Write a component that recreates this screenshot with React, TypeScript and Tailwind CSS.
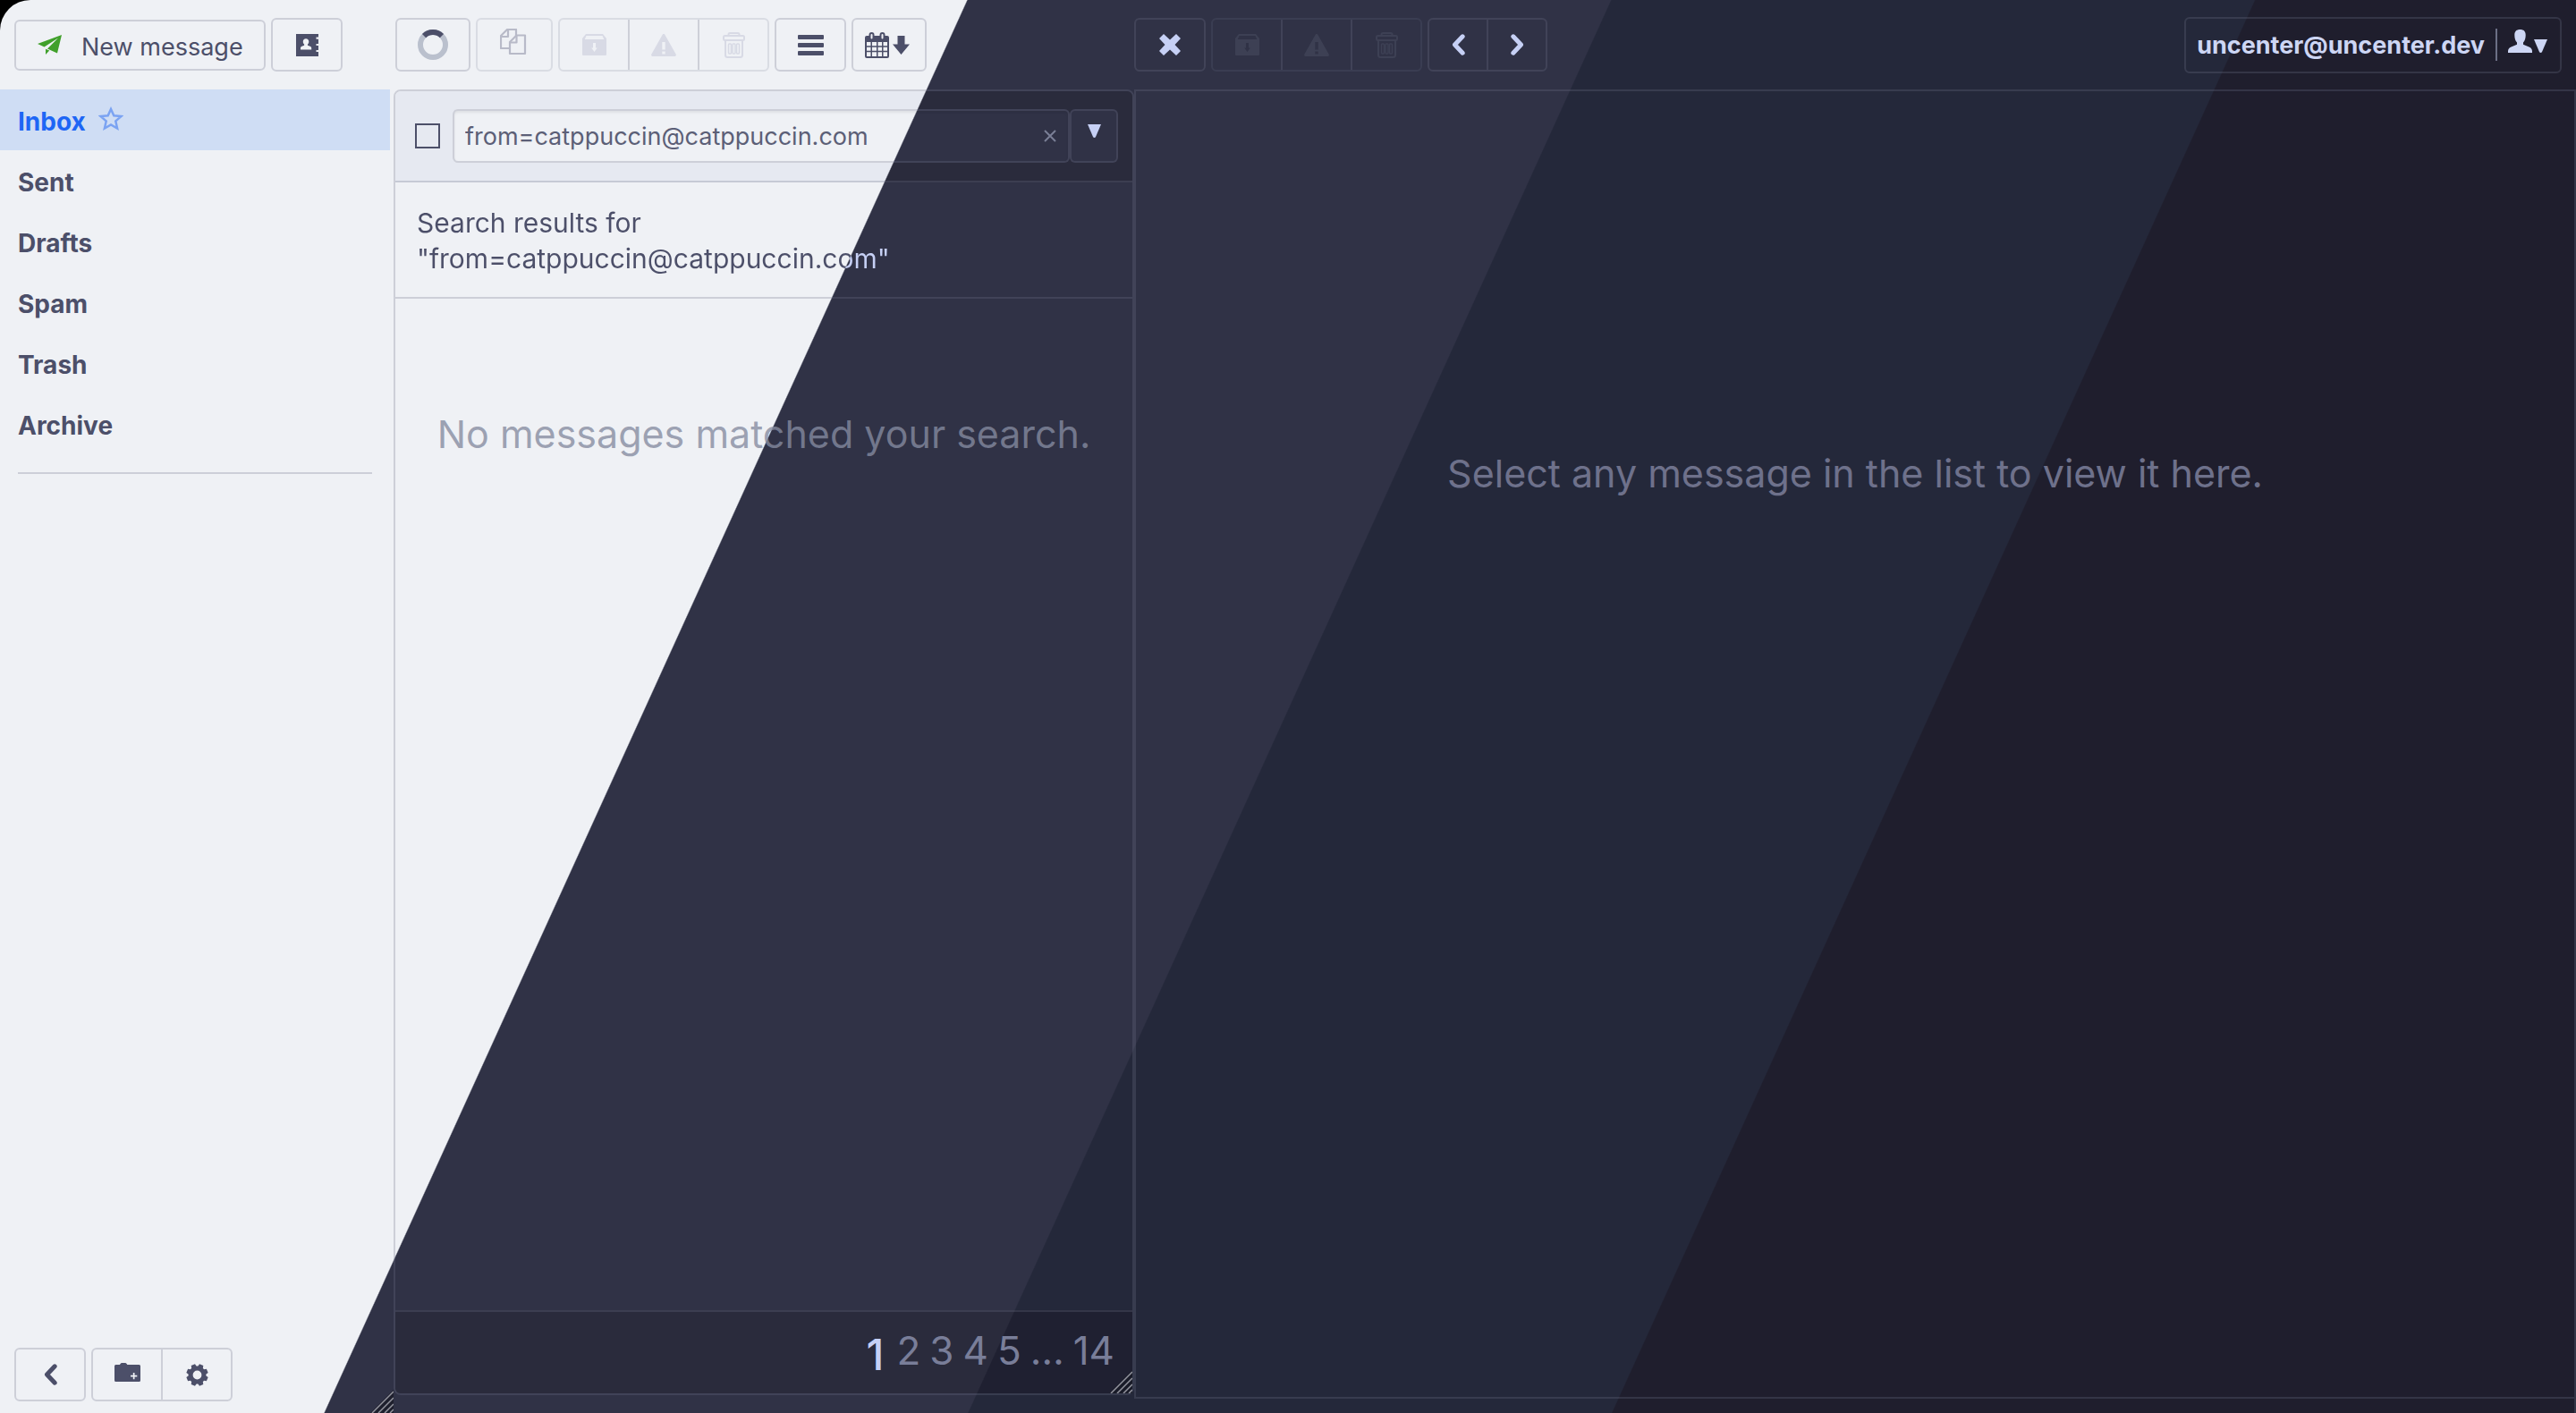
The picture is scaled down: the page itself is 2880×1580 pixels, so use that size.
import type { ReactNode } from "react";

// Four flavours share one page; each diagonal band shows one of them.
const BASE =
  "bg-fixed bg-[linear-gradient(114.47deg,#eff1f5_30.03%,#303246_30.07%,#303246_50.03%,#24283a_50.07%,#24283a_70.03%,#1f1e2d_70.07%)]";
const MANTLE =
  "bg-fixed bg-[linear-gradient(114.47deg,#e6e9f1_30.03%,#2a2b3c_30.07%,#2a2b3c_50.03%,#1f2031_50.07%,#1f2031_70.03%,#191825_70.07%)]";
const TEXT =
  "bg-fixed bg-clip-text text-transparent bg-[linear-gradient(114.47deg,#4c4f69_30.03%,#c6d0f5_30.07%)]";
const LINE = "border-[rgb(112_117_140/0.265)]";
const FAINT = "border-[rgb(112_117_140/0.17)]";

type IconProps = { w: number; h: number; children: ReactNode; className?: string };

function Icon({ w, h, children, className = "" }: IconProps) {
  return (
    <svg
      aria-hidden="true"
      width={w}
      height={h}
      viewBox={`0 0 ${w} ${h}`}
      fill="currentColor"
      className={`shrink-0 ${className}`}
    >
      {children}
    </svg>
  );
}

function PaperPlane() {
  return (
    <Icon w={27} h={22} className="text-[#40a02b]">
      <path d="M27 0 0 10l7.5 3.6L23 3.5 11 15.6 22 20.5Z" />
      <path d="M9 15.8v6.2l4.2-4.4Z" />
    </Icon>
  );
}

function AddressBook() {
  return (
    <Icon w={25} h={25}>
      <path
        fillRule="evenodd"
        d="M0 0h25v3.5h-2.5v2.2H25v5.2h-2.5v2H25v5h-2.5v2.2H25V25H0ZM11 5.2c-2 0-3.2 1.5-3.2 3.4 0 1.3.5 2.3 1.3 2.9v1.2L6 14c-.7.4-1 1-1 1.8V17.5h12.200V15.800c0-.8-.4-1.400-1-1.800l-3.200-1.300v-1.200c.8-.6 1.300-1.600 1.300-2.900 0-1.900-1.300-3.400-3.300-3.400Z"
      />
    </Icon>
  );
}

function Spinner() {
  return (
    <Icon w={34} h={34}>
      <circle cx="17" cy="17" r="14" fill="none" stroke="#bac0cd" strokeWidth="6" />
      <path d="M7.100 7.100a14 14 0 0 1 19.800 0" fill="none" stroke="#4c4f69" strokeWidth="6" />
    </Icon>
  );
}

function Copy() {
  return (
    <Icon w={32} h={36}>
      <g fill="none" stroke="currentColor" strokeWidth="2.200" strokeLinejoin="round">
        <path d="M11 22H1V8l7-7h10v7" />
        <path d="M1.500 9H9V1.500" />
        <path d="M11 15v13h17V7.500H18.500L11 15Z" />
        <path d="M11.500 15.500H18.500V8" />
      </g>
    </Icon>
  );
}

function Archive() {
  return (
    <Icon w={27} h={24}>
      <path d="M4 0h19l4 5v1.500h-2.500L22.500 2H4.500L2.500 6.500H0V5Z" />
      <path
        fillRule="evenodd"
        d="M0 6h27v17a1 1 0 0 1-1 1H1a1 1 0 0 1-1-1ZM12 10v5.500h-1.800L13.500 20l3.300-4.500H15V10Z"
      />
    </Icon>
  );
}

function Warning() {
  return (
    <Icon w={28} h={25}>
      <path
        fillRule="evenodd"
        d="M14 0c.8 0 1.200.5 1.600 1.200l12 21.300c.6 1.200.2 2.500-1.100 2.500h-25C.2 25-.2 23.700.4 22.500l12-21.300C12.800.5 13.200 0 14 0Zm-1.700 9v8.500h3.400V9Zm0 10.500v3h3.400v-3Z"
      />
    </Icon>
  );
}

function Trash() {
  return (
    <Icon w={25} h={29}>
      <g fill="none" stroke="currentColor" strokeWidth="2">
        <path d="M6.500 4V2.500C6.500 1.500 7 1 8 1h9c1 0 1.500.5 1.500 1.500V4" />
        <rect x="1" y="4" width="23" height="5" rx="1.500" />
        <path d="M3 9v16.500C3 27 4 28 5.500 28h14c1.500 0 2.500-1 2.500-2.500V9" />
        <rect x="6.500" y="13" width="3" height="11" rx="1" strokeWidth="1.500" />
        <rect x="11" y="13" width="3" height="11" rx="1" strokeWidth="1.500" />
        <rect x="15.500" y="13" width="3" height="11" rx="1" strokeWidth="1.500" />
      </g>
    </Icon>
  );
}

function Menu() {
  return (
    <Icon w={29} h={23}>
      <rect width="29" height="5" rx="1" />
      <rect y="9" width="29" height="5" rx="1" />
      <rect y="18" width="29" height="5" rx="1" />
    </Icon>
  );
}

function Calendar() {
  return (
    <Icon w={27} h={29}>
      <path
        fillRule="evenodd"
        d="M2 4h23a2 2 0 0 1 2 2v21a2 2 0 0 1-2 2H2a2 2 0 0 1-2-2V6a2 2 0 0 1 2-2Zm0 7v4.200h4.500V11Zm6 0v4.200h5V11Zm6.500 0v4.200h4.500V11Zm6 0v4.200H25V11ZM2 16.700v4.100h4.500v-4.100Zm6 0v4.100h5v-4.100Zm6.500 0v4.100h4.500v-4.100Zm6 0v4.100H25v-4.100ZM2 22.300V27h4.500v-4.700Zm6 0V27h5v-4.700Zm6.500 0V27h4.500v-4.700Zm6 0V27H25v-4.700Z"
      />
      <rect x="5.500" y="1" width="4" height="7.500" rx="2" fill="#eff1f5" stroke="currentColor" strokeWidth="2" />
      <rect x="17.500" y="1" width="4" height="7.500" rx="2" fill="#eff1f5" stroke="currentColor" strokeWidth="2" />
    </Icon>
  );
}

function ArrowDown() {
  return (
    <Icon w={19} h={21}>
      <path d="M5.500 0h8v9.500H19L9.500 21 0 9.500h5.500Z" />
    </Icon>
  );
}

function Cross() {
  return (
    <Icon w={24} h={24}>
      <path d="M5 0 12 6.500 19 0l5 5-6.500 7 6.500 7-5 5-7-6.500L5 24l-5-5 6.500-7L0 5Z" />
    </Icon>
  );
}

function Chevron({ right = false }: { right?: boolean }) {
  return (
    <Icon w={15} h={24}>
      <path
        d={right ? "M2.800 2.800 11.500 12l-8.700 9.200" : "M12.200 2.800 3.500 12l8.700 9.200"}
        fill="none"
        stroke="currentColor"
        strokeWidth="5"
        strokeLinecap="round"
        strokeLinejoin="round"
      />
    </Icon>
  );
}

function FolderPlus() {
  return (
    <Icon w={29} h={27}>
      <path
        fillRule="evenodd"
        d="M1.500 2H6c.7-1.500 1.500-2 2.500-2h3c1.200 0 2 .5 2.800 2h13.200A1.500 1.500 0 0 1 29 3.500v16a1.500 1.500 0 0 1-1.500 1.500h-26A1.500 1.500 0 0 1 0 19.500v-16A1.500 1.500 0 0 1 1.500 2Zm19.300 9v2.800H18v1.700h2.800v2.800h1.700v-2.800h2.800v-1.700h-2.800V11Z"
      />
    </Icon>
  );
}

function Gear() {
  const teeth = [22.5, 67.5, 112.5, 157.5, 202.5, 247.5, 292.5, 337.5];
  return (
    <Icon w={25} h={25}>
      <circle cx="12.500" cy="12.500" r="7.400" fill="none" stroke="currentColor" strokeWidth="5" />
      {teeth.map((angle) => (
        <path key={angle} d="M9.200 4.500 10.200.3h4.600l1 4.200Z" transform={`rotate(${angle} 12.500 12.500)`} />
      ))}
    </Icon>
  );
}

function Star() {
  return (
    <Icon w={28} h={27}>
      <path
        d="m14 3 3.300 7.300 8 .8-6 5.300 1.800 8.100L14 20.400l-7.100 4.100 1.800-8.100-6-5.300 8-.8Z"
        fill="none"
        stroke="currentColor"
        strokeWidth="2.500"
      />
    </Icon>
  );
}

function Person() {
  return (
    <Icon w={27} h={26}>
      <path d="M13.500 0c4 0 6.200 2 6.200 6.200 0 3.800-.9 6.300-2.700 8.300v2.300l6.500 2.700c2.300 1 3.500 2.500 3.500 5V26H0v-1.500c0-2.500 1.200-4 3.500-5l6.500-2.700v-2.300C8.200 12.500 7.300 10 7.300 6.200 7.300 2 9.500 0 13.500 0Z" />
    </Icon>
  );
}

function Triangle() {
  return (
    <Icon w={15} h={15}>
      <path d="M0 0h15L9 14a1.700 1.700 0 0 1-3 0Z" />
    </Icon>
  );
}

function ResizeGrip({ className }: { className: string }) {
  return (
    <svg aria-hidden="true" width="26" height="26" viewBox="0 0 26 26" fill="none" className={`absolute ${className}`}>
      <path d="M0 26 26 0v26Z" fill="#181926" fillOpacity=".75" />
      <path d="M2 26 26 2M9 26 26 9M16 26l10-10M22 26l4-4" stroke="#94959f" strokeWidth="1.500" />
    </svg>
  );
}

type ButtonProps = { label: string; children: ReactNode; className?: string; disabled?: boolean };

function Cell({ label, children, className = "", disabled = false }: ButtonProps) {
  return (
    <button
      type="button"
      aria-label={label}
      disabled={disabled}
      className={`flex items-center justify-center ${className}`}
    >
      {children}
    </button>
  );
}

function MessageActions({ className }: { className: string }) {
  return (
    <div className={`flex h-[60px] rounded-md border-2 ${FAINT} ${className}`}>
      <Cell label="Archive" disabled className="flex-1">
        <Archive />
      </Cell>
      <Cell label="Spam" disabled className={`flex-1 border-x-2 ${LINE}`}>
        <Warning />
      </Cell>
      <Cell label="Delete" disabled className="flex-1">
        <Trash />
      </Cell>
    </div>
  );
}

const folders = ["Sent", "Drafts", "Spam", "Trash", "Archive"];
const pages = ["2", "3", "4", "5", "…", "14"];

function Sidebar() {
  return (
    <aside className="relative flex w-[440px] shrink-0 flex-col text-[#4c4f69]">
      <div className="flex h-[100px] items-center gap-1.5 px-4">
        <button
          type="button"
          className={`flex h-[57px] w-[281px] items-center gap-[22px] rounded-md border-2 pl-6 text-[27px] ${LINE}`}
        >
          <PaperPlane />
          <span className="pt-1.5">New message</span>
        </button>
        <Cell label="Contacts" className={`h-[60px] w-20 rounded-md border-2 ${LINE}`}>
          <AddressBook />
        </Cell>
      </div>
      <nav aria-label="Folders" className="pr-1 text-[28px] font-bold">
        <a href="#inbox" className="flex h-[68px] items-center gap-3.5 bg-[#cfddf4] pt-1 pl-5 text-[#1e66f5]">
          Inbox
          <span className="pb-2 text-[#7ba3f2]">
            <Star />
          </span>
        </a>
        {folders.map((name) => (
          <a key={name} href={`#${name.toLowerCase()}`} className="flex h-[68px] items-center pt-1 pl-5">
            {name}
          </a>
        ))}
      </nav>
      <hr className={`mt-5 mr-6 ml-5 border-t-2 ${LINE}`} />
      <div className="mt-auto flex gap-1.5 px-4 pb-[13px]">
        <Cell label="Collapse" className={`h-[60px] w-20 rounded-md border-2 ${LINE}`}>
          <Chevron />
        </Cell>
        <div className={`flex h-[60px] w-[158px] rounded-md border-2 ${LINE}`}>
          <Cell label="New folder" className={`flex-1 border-r-2 ${LINE}`}>
            <FolderPlus />
          </Cell>
          <Cell label="Settings" className="flex-1">
            <Gear />
          </Cell>
        </div>
      </div>
      <ResizeGrip className="right-0 bottom-0" />
    </aside>
  );
}

function MessageList() {
  return (
    <section aria-label="Messages" className="flex w-[828px] shrink-0 flex-col pb-5">
      <div className="flex h-[100px] shrink-0 items-center gap-1.5 pl-0.5 text-[#4c4f69]">
        <Cell label="Refresh" className={`h-[60px] w-[84px] rounded-md border-2 ${LINE}`}>
          <Spinner />
        </Cell>
        <Cell label="Copy" disabled className={`h-[60px] w-[86px] rounded-md border-2 text-[#b8bac8] ${FAINT}`}>
          <Copy />
        </Cell>
        <MessageActions className="w-[236px] text-[#d8dae5]" />
        <Cell label="More" className={`h-[60px] w-20 rounded-md border-2 ${LINE}`}>
          <Menu />
        </Cell>
        <Cell label="Sort by date" className={`h-[60px] w-[84px] gap-1 rounded-md border-2 pr-1 ${LINE}`}>
          <Calendar />
          <ArrowDown />
        </Cell>
      </div>
      <div className={`relative flex flex-1 flex-col rounded-lg border-2 ${LINE}`}>
        <div className={`flex h-[102px] shrink-0 items-center rounded-t-md border-b-2 pr-4 pl-[22px] ${MANTLE} ${LINE}`}>
          <input
            type="checkbox"
            aria-label="Select all"
            className="size-7 shrink-0 appearance-none border-2 border-[#4c4f69]"
          />
          <div className={`ml-3.5 flex h-[60px] flex-1 items-center rounded-md border-2 shadow-[inset_0_2px_3px_rgb(0_0_0/0.07)] ${BASE} ${LINE}`}>
            <input
              type="text"
              aria-label="Search"
              defaultValue="from=catppuccin@catppuccin.com"
              className="min-w-0 flex-1 bg-transparent pt-0.5 pl-3 text-[27px] text-[#5c5f77] outline-none"
            />
            <button type="button" aria-label="Clear search" className="w-10 text-[#7a7f96]">
              <svg aria-hidden="true" viewBox="0 0 14 18" className="mx-auto h-[18px] w-3.5" fill="none" stroke="currentColor" strokeWidth="2">
                <path d="m1 3 12 12M13 3 1 15" />
              </svg>
            </button>
          </div>
          <Cell
            label="Advanced search"
            className={`h-[60px] w-[54px] rounded-md border-2 pb-3 text-[#c6d0f5] ${BASE} ${LINE}`}
          >
            <Triangle />
          </Cell>
        </div>
        <h1 className={`border-b-2 px-6 pt-[25px] pb-[23px] text-[30px] leading-10 ${LINE}`}>
          <span className={`block ${TEXT}`}>
            Search results for
            <br />
            "from=catppuccin@catppuccin.com"
          </span>
        </h1>
        <p className="pt-[121px] text-center text-[43px] leading-[60px] text-[rgb(133_139_160/0.79)]">
          No messages matched your search.
        </p>
        <nav
          aria-label="Pages"
          className={`mt-auto flex h-[93px] items-center justify-end gap-2.5 rounded-b-md border-t-2 pr-5 pb-1.5 text-[44px] text-[#797e99] ${MANTLE} ${LINE}`}
        >
          <a href="#page-1" aria-current="page" className="pt-2.5 pr-1 text-5xl font-medium text-[#c6d0f5]">
            1
          </a>
          {pages.map((page) =>
            page === "…" ? (
              <span key={page}>{page}</span>
            ) : (
              <a key={page} href={`#page-${page}`}>
                {page}
              </a>
            ),
          )}
        </nav>
        <ResizeGrip className="right-0 bottom-0" />
      </div>
    </section>
  );
}

function MessageView() {
  return (
    <main className="flex min-w-0 flex-1 flex-col">
      <div className="flex h-[100px] shrink-0 items-center gap-1.5 pr-4 text-[#c6d0f5]">
        <Cell label="Close" className={`h-[60px] w-20 rounded-md border-2 ${LINE}`}>
          <Cross />
        </Cell>
        <MessageActions className="w-[236px] text-[#3d4054]" />
        <div className={`flex h-[60px] w-[134px] rounded-md border-2 ${LINE}`}>
          <Cell label="Previous" className={`flex-1 border-r-2 ${LINE}`}>
            <Chevron />
          </Cell>
          <Cell label="Next" className="flex-1">
            <Chevron right />
          </Cell>
        </div>
        <button
          type="button"
          className={`ml-auto flex h-[63px] items-center rounded-md border-2 pr-3.5 pl-3 text-[27px] font-bold text-[#cdd6f4] ${LINE}`}
        >
          <span className="pt-0.5">uncenter@uncenter.dev</span>
          <span className="ml-3 h-9 w-0.5 bg-[#6c6f85]" />
          <span className="ml-3 flex items-end gap-0.5 pb-2">
            <Person />
            <Triangle />
          </span>
        </button>
      </div>
      <div className={`flex flex-1 flex-col border-t-2 border-r-2 pb-4 ${LINE}`}>
        <div className={`flex-1 border-b-2 border-l-2 ${LINE}`}>
          <p className="pt-[397px] text-center text-[43px] leading-[60px] text-[#6e718b]">
            Select any message in the list to view it here.
          </p>
        </div>
      </div>
    </main>
  );
}

export default function App() {
  return (
    <div className="min-h-screen bg-black font-['Inter',sans-serif]">
      <div className={`flex min-h-screen rounded-tl-[34px] ${BASE}`}>
        <Sidebar />
        <MessageList />
        <MessageView />
      </div>
    </div>
  );
}
